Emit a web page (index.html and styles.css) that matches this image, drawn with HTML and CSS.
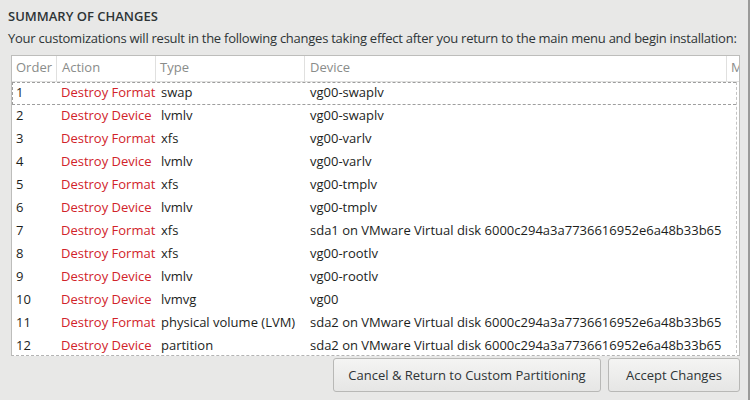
FILE: index.html
```html
<!DOCTYPE html>
<html>
<head>
<meta charset="utf-8">
<link rel="stylesheet" href="styles.css">
</head>
<body>
<div class="dialog">
  <h1 class="title">SUMMARY OF CHANGES</h1>
  <p class="intro">Your customizations will result in the following changes taking effect after you return to the main menu and begin installation:</p>
  <div class="table">
    <div class="head">
      <div class="hc c-order">Order</div>
      <div class="hc c-action">Action</div>
      <div class="hc c-type">Type</div>
      <div class="hc c-device">Device</div>
      <div class="hc c-more">M</div>
    </div>
    <div class="rows">
      <div class="row focus"><span class="c-order">1</span><span class="c-action act">Destroy Format</span><span class="c-type">swap</span><span class="c-device">vg00-swaplv</span></div>
      <div class="row"><span class="c-order">2</span><span class="c-action act">Destroy Device</span><span class="c-type">lvmlv</span><span class="c-device">vg00-swaplv</span></div>
      <div class="row"><span class="c-order">3</span><span class="c-action act">Destroy Format</span><span class="c-type">xfs</span><span class="c-device">vg00-varlv</span></div>
      <div class="row"><span class="c-order">4</span><span class="c-action act">Destroy Device</span><span class="c-type">lvmlv</span><span class="c-device">vg00-varlv</span></div>
      <div class="row"><span class="c-order">5</span><span class="c-action act">Destroy Format</span><span class="c-type">xfs</span><span class="c-device">vg00-tmplv</span></div>
      <div class="row"><span class="c-order">6</span><span class="c-action act">Destroy Device</span><span class="c-type">lvmlv</span><span class="c-device">vg00-tmplv</span></div>
      <div class="row"><span class="c-order">7</span><span class="c-action act">Destroy Format</span><span class="c-type">xfs</span><span class="c-device">sda1 on VMware Virtual disk 6000c294a3a7736616952e6a48b33b65</span></div>
      <div class="row"><span class="c-order">8</span><span class="c-action act">Destroy Format</span><span class="c-type">xfs</span><span class="c-device">vg00-rootlv</span></div>
      <div class="row"><span class="c-order">9</span><span class="c-action act">Destroy Device</span><span class="c-type">lvmlv</span><span class="c-device">vg00-rootlv</span></div>
      <div class="row"><span class="c-order">10</span><span class="c-action act">Destroy Device</span><span class="c-type">lvmvg</span><span class="c-device">vg00</span></div>
      <div class="row"><span class="c-order">11</span><span class="c-action act">Destroy Format</span><span class="c-type">physical volume (LVM)</span><span class="c-device">sda2 on VMware Virtual disk 6000c294a3a7736616952e6a48b33b65</span></div>
      <div class="row"><span class="c-order">12</span><span class="c-action act">Destroy Device</span><span class="c-type">partition</span><span class="c-device">sda2 on VMware Virtual disk 6000c294a3a7736616952e6a48b33b65</span></div>
    </div>
  </div>
  <div class="buttons">
    <button class="btn btn-cancel">Cancel &amp; Return to Custom Partitioning</button>
    <button class="btn btn-accept">Accept Changes</button>
  </div>
</div>
</body>
</html>
```

FILE: styles.css
```css
html, body {
  margin: 0;
  padding: 0;
}
body {
  width: 750px;
  height: 400px;
  background: #e8e8e7;
  font-family: "Open Sans", "DejaVu Sans", sans-serif;
  color: #2e3436;
  overflow: hidden;
}
.dialog {
  box-sizing: border-box;
  width: 750px;
  height: 400px;
  padding: 7px 8px 0 8px;
  border-right: 2px solid #9a9a99;
  display: flex;
  flex-direction: column;
}
.title {
  margin: 0;
  font-size: 13px;
  font-weight: 600;
  line-height: 18px;
  color: #2e3436;
  letter-spacing: 0;
}
.intro {
  margin: 4px 0 0 0;
  font-size: 13px;
  line-height: 18px;
  white-space: nowrap;
  letter-spacing: -0.25px;
}
.table {
  margin: 8px 0 0 3px;
  width: 729px;
  height: 301px;
  box-sizing: border-box;
  background: #ffffff;
  border: 1px solid #bdbdbb;
  border-bottom: 1px dashed #b4b4b4;
  overflow: hidden;
  font-size: 13px;
}
.head {
  display: flex;
  height: 25px;
  border-bottom: 1px solid #e0e0df;
  color: #8a8c8a;
}
.hc {
  box-sizing: border-box;
  height: 25px;
  line-height: 22px;
  padding-left: 4px;
  border-right: 1px solid #e0e0df;
  flex: none;
  overflow: hidden;
}
.head .c-order { width: 45px; }
.head .c-action { width: 99px; padding-left: 5px; }
.head .c-type { width: 149px; }
.head .c-device { width: 422px; padding-left: 5px; }
.head .c-more { width: 12px; border-right: none; padding-left: 4px; }
.rows {
  display: flex;
  flex-direction: column;
  margin-right: 2px;
  border-right: 1px dashed #c4c4c4;
}
.row {
  display: flex;
  height: 23px;
  line-height: 21px;
  box-sizing: border-box;
  white-space: nowrap;
  color: #1c1e1c;
}
.row.focus {
  border: 1px dashed #9e9e9e;
  border-right: none;
  line-height: 19px;
}
.row span {
  flex: none;
  box-sizing: border-box;
}
.row .c-order { width: 45px; padding-left: 4px; }
.row .c-action { width: 99px; padding-left: 4px; }
.row .c-type { width: 149px; padding-left: 5px; }
.row .c-device { padding-left: 5px; }
.row.focus .c-order { width: 44px; padding-left: 3px; }
.act { color: #d1232a; }
.buttons {
  display: flex;
  justify-content: flex-end;
  gap: 7px;
  margin-top: 2px;
}
.btn {
  height: 34px;
  box-sizing: border-box;
  border: 1px solid #b8b8b6;
  border-radius: 3px;
  background: linear-gradient(#f4f4f3, #e6e6e5);
  font-family: "Open Sans", "DejaVu Sans", sans-serif;
  font-size: 13px;
  color: #2e3436;
  padding: 0;
}
.btn-cancel { width: 268px; }
.btn-accept { width: 132px; }
```
